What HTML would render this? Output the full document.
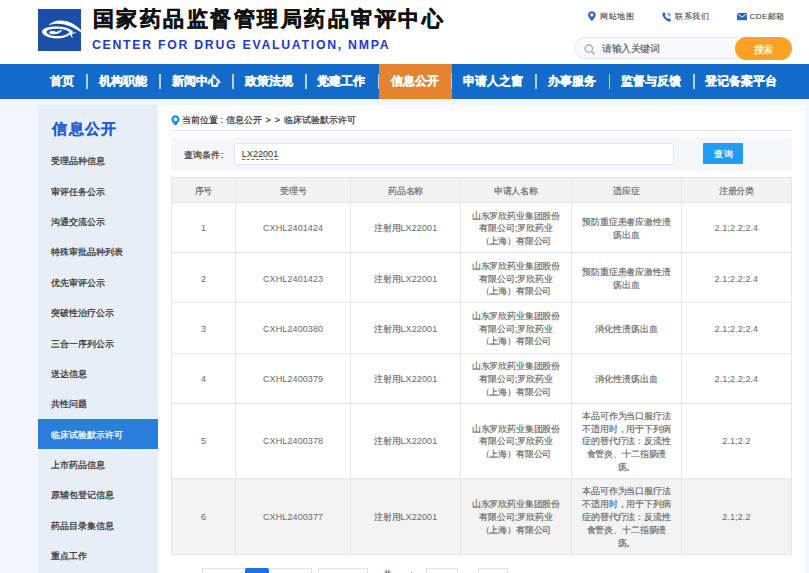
<!DOCTYPE html>
<html><head><meta charset="utf-8">
<style>
*{margin:0;padding:0;box-sizing:border-box}
html,body{width:809px;height:573px;overflow:hidden;background:#f3f7fd;font-family:"Liberation Sans",sans-serif;color:#333}
.abs{position:absolute}
#header{position:absolute;left:0;top:0;width:809px;height:64px;background:#fff}
#logo{position:absolute;left:38px;top:9px;width:43px;height:42px;background:#1b4ea6}
#title{position:absolute;left:92.5px;top:6px;font-size:21px;letter-spacing:2.5px;font-weight:bold;color:#111;-webkit-text-stroke:0.5px #111;white-space:nowrap;line-height:26px}
#entitle{position:absolute;left:92px;top:37.5px;font-size:12.3px;font-weight:bold;color:#2438c8;white-space:nowrap;letter-spacing:1.72px;word-spacing:0px;line-height:14px}
.toplink{position:absolute;top:11px;font-size:8px;letter-spacing:0.5px;color:#444;-webkit-text-stroke:0.1px #444;line-height:11px;white-space:nowrap}
#search{position:absolute;left:574px;top:37px;width:217px;height:22px;border-radius:11px;background:#f8f9fb;border:1px solid #e6e8ec}
#search .ph{position:absolute;left:27px;top:4.5px;font-size:10px;letter-spacing:-0.45px;color:#555;line-height:12px;-webkit-text-stroke:0.1px #555}
#sbtn{position:absolute;left:734.8px;top:36.5px;width:57px;height:23.2px;border-radius:11.6px;background:#f9a224;color:#fff;font-size:10px;letter-spacing:-0.3px;text-align:center;line-height:25px;-webkit-text-stroke:0.2px #fff}
#nav{position:absolute;left:0;top:64px;width:809px;height:34.5px;background:#126bca}
#nav .it{position:absolute;top:0;height:34.5px;line-height:34.5px;color:#fff;font-weight:bold;font-size:12px;text-align:center;white-space:nowrap;-webkit-text-stroke:0.3px #fff}
#nav .sep{position:absolute;top:10px;width:1.6px;height:15px;background:#b5d0f0}
#nav .act{background:#e5842e}
#side{position:absolute;left:38px;top:105px;width:120.4px;height:468px;background:#e8eef6}
#side h2{position:absolute;left:14.3px;top:14.2px;font-size:15px;letter-spacing:1.35px;font-weight:bold;color:#1d5fd6;-webkit-text-stroke:0.15px #1d5fd6;line-height:20px;white-space:nowrap}
.si{position:absolute;left:0;width:120.4px;height:30.35px;line-height:32.3px;font-size:8.85px;color:#333;padding-left:12.5px;-webkit-text-stroke:0.25px #333;white-space:nowrap}
.si.on{background:#2a7fde;color:#fff;-webkit-text-stroke:0.25px #fff;height:30.8px;line-height:32.6px}
#main{position:absolute;left:158px;top:105px;width:646.5px;height:468px;background:#fff}
#crumb{position:absolute;left:24px;top:10px;font-size:9px;line-height:11px;color:#333;-webkit-text-stroke:0.2px #333;white-space:nowrap}
#crline{position:absolute;left:13px;top:25px;width:621px;height:1px;background:#e8e8e8}
#qbar{position:absolute;left:13px;top:32px;width:621px;height:33.5px;background:#f4f6f9}
#qlab{position:absolute;left:12.5px;top:12.6px;font-size:9px;line-height:11px;color:#333;-webkit-text-stroke:0.2px #333}
#qin{position:absolute;left:63.3px;top:6px;width:439.5px;height:22px;background:#fff;border:1px solid #e4e6ea;border-radius:2px}
#qin span{position:absolute;left:6.5px;top:5px;font-size:9.1px;line-height:10.2px;color:#333;border-bottom:1px dashed #e44}
#qbtn{position:absolute;left:532.3px;top:6.3px;width:40px;height:20.3px;background:#1e9ef4;color:#fff;font-size:9px;line-height:22px;letter-spacing:1px;text-indent:1px;text-align:center;border-radius:1px;-webkit-text-stroke:0.25px #fff}
table{position:absolute;left:12.8px;top:71.6px;border-collapse:collapse;table-layout:fixed;width:620px}
td,th{border:1px solid #e6e6e6;font-size:9px;letter-spacing:-0.15px;color:#666;text-align:center;font-weight:normal;line-height:12.8px;padding:2px 0 0;vertical-align:middle;white-space:nowrap;-webkit-text-stroke:0.15px #666}
th{background:#f2f2f2;height:25.7px}
.n{-webkit-text-stroke:0;letter-spacing:0.1px;color:#6a6a6a}
tr.r{height:50.1px}
tr.r5{height:75.2px}
tr.r6{height:76px;background:#f3f3f3}
</style></head><body>
<div id="header">
  <div id="logo">
    <svg width="43" height="42" viewBox="0 0 43 42">
      <path d="M10.2,16.8 C16,9.5 31,8.5 43,21 L43,23.6 C32,14.8 18,12.8 10.2,16.8Z" fill="#fff"/>
      <path fill-rule="evenodd" fill="#fff" d="M4,22.6 C4,19 12,17.2 20,17.4 C27,17.6 32,19.5 35,22.5 C32,26.5 27,29.4 19,29.4 C11,29.4 4,26.5 4,22.6Z M8.6,23 C8.6,21 13,19.8 19,19.8 C25,19.8 29.5,21.3 31.5,23.2 C29,25.8 24.5,27.1 19,27.1 C13,27.1 8.6,25.2 8.6,23Z"/>
      <path d="M31.5,24.5 Q35,23 39,23 Q35.5,24.6 33.8,25.6 Q34.6,27.4 34.6,29.6 Q32.8,27.2 31.5,24.5Z" fill="#fff"/>
      <path d="M10.9,24 Q11.2,22 14.2,22.1 Q16.8,22.3 18.4,23 Q20.2,22.2 21.6,21.5 L24.2,21 Q23.2,22.9 21.2,23.9 Q19,25.1 15.8,25.2 Q12.2,25.3 10.9,24Z" fill="#fff"/>
    </svg>
  </div>
  <div id="title">国家药品监督管理局药品审评中心</div>
  <div id="entitle">CENTER FOR DRUG EVALUATION, NMPA</div>

  <svg class="abs" style="left:588.3px;top:10.8px" width="8" height="10" viewBox="0 0 8 10"><path d="M3.9,0.2 C1.8,0.2 0.1,1.8 0.1,3.9 C0.1,6.2 3.9,10 3.9,10 C3.9,10 7.7,6.2 7.7,3.9 C7.7,1.8 6,0.2 3.9,0.2Z M3.9,2.3 A1.6,1.6 0 1 1 3.9,5.5 A1.6,1.6 0 1 1 3.9,2.3Z" fill="#2f66c4" fill-rule="evenodd"/></svg>
  <div class="toplink" style="left:600px">网站地图</div>
  <svg class="abs" style="left:662px;top:11.5px" width="11" height="10" viewBox="0 0 11 10"><path d="M0.6,1.2 Q1.2,0.3 2.2,0.4 Q3.2,0.6 3.4,1.8 Q3.6,3 2.8,3.5 Q3.5,5.5 5.6,6.8 Q6.3,6 7.4,6.4 Q8.8,6.9 9,8 Q9.1,9.2 8,9.6 Q6.5,10 4.5,8.6 Q1.8,6.6 0.6,3.5 Q0.2,2.2 0.6,1.2Z" fill="#2c62c6"/><path d="M5.4,0.6 Q8.9,0.9 9.1,4.2 L6.6,4.2 Q6.4,2.8 5.4,2.6Z" fill="#86a5e0"/></svg>
  <div class="toplink" style="left:675px">联系我们</div>
  <svg class="abs" style="left:737px;top:13.3px" width="10" height="8" viewBox="0 0 10 8"><path d="M0,0 L10,0 L10,7.2 L0,7.2Z" fill="#2f66c4"/><path d="M0.3,0.8 L5,4 L9.7,0.8" stroke="#fff" stroke-width="0.9" fill="none"/></svg>
  <div class="toplink" style="left:749.5px">CDE邮箱</div>

  <div id="search">
    <svg class="abs" style="left:8.5px;top:5.5px" width="12" height="12" viewBox="0 0 12 12"><circle cx="4.8" cy="4.6" r="3.7" stroke="#a0a0a0" stroke-width="1.1" fill="none"/><path d="M7.6,7.4 L10.5,10.3" stroke="#a0a0a0" stroke-width="1.2"/></svg>
    <div class="ph">请输入关键词</div>
  </div>
  <div id="sbtn">搜索</div>
</div>

<div id="nav">
  <div class="it" style="left:37.9px;width:48px">首页</div><div class="sep" style="left:86px"></div>
  <div class="it" style="left:86.9px;width:72px">机构职能</div><div class="sep" style="left:159px"></div>
  <div class="it" style="left:159.9px;width:72px">新闻中心</div><div class="sep" style="left:232px"></div>
  <div class="it" style="left:232.9px;width:72px">政策法规</div><div class="sep" style="left:305px"></div>
  <div class="it" style="left:305.4px;width:72px">党建工作</div><div class="sep" style="left:377.8px"></div>
  <div class="it act" style="left:379px;width:72.6px;padding-right:1.2px">信息公开</div><div class="sep" style="left:450.8px"></div>
  <div class="it" style="left:451.4px;width:84px">申请人之窗</div><div class="sep" style="left:535px"></div>
  <div class="it" style="left:535.9px;width:72px">办事服务</div><div class="sep" style="left:608.5px"></div>
  <div class="it" style="left:609.4px;width:84px">监督与反馈</div><div class="sep" style="left:693px"></div>
  <div class="it" style="left:693.4px;width:96px">登记备案平台</div>
</div>

<div id="side">
  <h2>信息公开</h2>
  <div class="si" style="top:40.4px">受理品种信息</div>
  <div class="si" style="top:70.75px">审评任务公示</div>
  <div class="si" style="top:101.1px">沟通交流公示</div>
  <div class="si" style="top:131.45px">特殊审批品种列表</div>
  <div class="si" style="top:161.8px">优先审评公示</div>
  <div class="si" style="top:192.15px">突破性治疗公示</div>
  <div class="si" style="top:222.5px">三合一序列公示</div>
  <div class="si" style="top:252.85px">送达信息</div>
  <div class="si" style="top:283.2px">共性问题</div>
  <div class="si on" style="top:313.55px">临床试验默示许可</div>
  <div class="si" style="top:343.9px">上市药品信息</div>
  <div class="si" style="top:374.25px">原辅包登记信息</div>
  <div class="si" style="top:404.6px">药品目录集信息</div>
  <div class="si" style="top:434.95px">重点工作</div>
</div>

<div id="main">
  <svg class="abs" style="left:13px;top:9.5px" width="9" height="11" viewBox="0 0 9 11"><path d="M4.5,0.3 C2.1,0.3 0.4,2.1 0.4,4.3 C0.4,6.9 4.5,10.8 4.5,10.8 C4.5,10.8 8.6,6.9 8.6,4.3 C8.6,2.1 6.9,0.3 4.5,0.3Z M4.5,2.4 A1.9,1.9 0 1 1 4.5,6.2 A1.9,1.9 0 1 1 4.5,2.4Z" fill="#1890ff" fill-rule="evenodd"/></svg>
  <div id="crumb">当前位置 : 信息公开 <span style="margin:0 1.5px">&gt;</span> <span style="margin-right:1.5px">&gt;</span> 临床试验默示许可</div>
  <div id="crline"></div>
  <div id="qbar">
    <div id="qlab">查询条件<span style="margin-left:1.5px">:</span></div>
    <div id="qin"><span>LX22001</span></div>
    <div id="qbtn">查询</div>
  </div>
  <table>
    <colgroup><col style="width:64.3px"><col style="width:115px"><col style="width:110px"><col style="width:110.7px"><col style="width:110.3px"><col style="width:109.7px"></colgroup>
    <tr><th>序号</th><th>受理号</th><th>药品名称</th><th>申请人名称</th><th>适应症</th><th>注册分类</th></tr>
    <tr class="r"><td class="n">1</td><td class="n">CXHL2401424</td><td>注射用<span class="n">LX22001</span></td><td>山东罗欣药业集团股份<br>有限公司;罗欣药业<br>（上海）有限公司</td><td>预防重症患者应激性溃<br>疡出血</td><td class="n">2.1;2.2;2.4</td></tr>
    <tr class="r"><td class="n">2</td><td class="n">CXHL2401423</td><td>注射用<span class="n">LX22001</span></td><td>山东罗欣药业集团股份<br>有限公司;罗欣药业<br>（上海）有限公司</td><td>预防重症患者应激性溃<br>疡出血</td><td class="n">2.1;2.2;2.4</td></tr>
    <tr class="r"><td class="n">3</td><td class="n">CXHL2400380</td><td>注射用<span class="n">LX22001</span></td><td>山东罗欣药业集团股份<br>有限公司;罗欣药业<br>（上海）有限公司</td><td>消化性溃疡出血</td><td class="n">2.1;2.2;2.4</td></tr>
    <tr class="r"><td class="n">4</td><td class="n">CXHL2400379</td><td>注射用<span class="n">LX22001</span></td><td>山东罗欣药业集团股份<br>有限公司;罗欣药业<br>（上海）有限公司</td><td>消化性溃疡出血</td><td class="n">2.1;2.2;2.4</td></tr>
    <tr class="r5"><td class="n">5</td><td class="n">CXHL2400378</td><td>注射用<span class="n">LX22001</span></td><td>山东罗欣药业集团股份<br>有限公司;罗欣药业<br>（上海）有限公司</td><td>本品可作为当口服疗法<br>不适用时，用于下列病<br>症的替代疗法：反流性<br>食管炎、十二指肠溃<br>疡。</td><td class="n">2.1;2.2</td></tr>
    <tr class="r6"><td class="n">6</td><td class="n">CXHL2400377</td><td>注射用<span class="n">LX22001</span></td><td>山东罗欣药业集团股份<br>有限公司;罗欣药业<br>（上海）有限公司</td><td>本品可作为当口服疗法<br>不适用时，用于下列病<br>症的替代疗法：反流性<br>食管炎、十二指肠溃<br>疡。</td><td class="n">2.1;2.2</td></tr>
  </table>
  <div class="abs" style="left:44px;top:462.5px;width:110px;height:20px;border:1px solid #e2e2e2;background:#fff"></div>
  <div class="abs" style="left:87px;top:462.7px;width:24px;height:20px;background:#1e6fe0;border-radius:2px"></div>
  <div class="abs" style="left:159.5px;top:462.5px;width:50px;height:20px;border:1px solid #e2e2e2;background:#fff"></div>
  <div class="abs" style="left:224.5px;top:463.5px;font-size:9px;line-height:11px;color:#444">共</div>
  <div class="abs" style="left:252.5px;top:467px;width:1.5px;height:2px;background:#777"></div>
  <div class="abs" style="left:268px;top:463px;width:32px;height:20px;border:1px solid #e2e2e2;background:#fff"></div>
  <div class="abs" style="left:319.5px;top:463px;width:30px;height:20px;border:1px solid #e2e2e2;background:#fff"></div>
</div>
</body></html>
